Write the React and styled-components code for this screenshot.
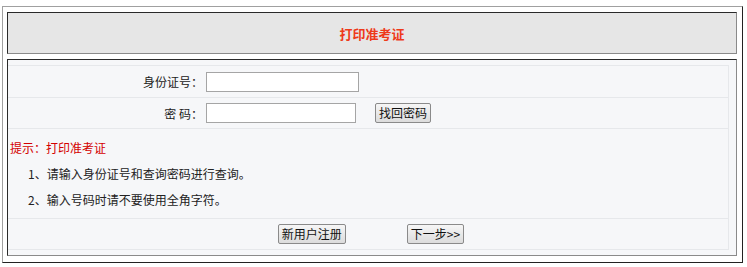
import React from 'react';
import styled, { createGlobalStyle } from 'styled-components';

const GlobalStyle = createGlobalStyle`
  html, body {
    margin: 0;
    padding: 0;
    background: #ffffff;
  }
  body {
    font-family: "Noto Sans CJK SC", "Liberation Sans", sans-serif;
    font-size: 12px;
    color: #222;
  }
`;

const Page = styled.div`
  padding: 6px 0 0 2px;
`;

const Frame = styled.div`
  box-sizing: border-box;
  width: 741px;
  height: 257px;
  display: flex;
  flex-direction: column;
  gap: 5px;
  padding: 5px 5px 6px 4px;
  border: 1px solid;
  border-color: #a0a0a0 #222 #222 #a0a0a0;
`;

const Cell = styled.div`
  box-sizing: border-box;
  border: 1px solid;
  border-color: #2a2a2a #8a8a8a #8a8a8a #2a2a2a;
  background: ${p => (p.$head ? '#e6e6e6' : '#f6f7f9')};
`;

const HeadCell = styled(Cell)`
  height: 42px;
  display: flex;
  align-items: center;
  justify-content: center;
`;

const Title = styled.h2`
  margin: 0;
  font-size: 13px;
  font-weight: bold;
  color: #ee3a1a;
`;

const BodyCell = styled(Cell)`
  flex: 1;
  padding: 5px 7px 4px 0;
`;

const FormTable = styled.div`
  border-right: 1px solid #e6e8eb;
  border-bottom: 1px solid #e6e8eb;
`;

const Row = styled.div`
  box-sizing: border-box;
  height: ${p => p.$h}px;
  border-top: 1px solid #e6e8eb;
  display: flex;
  align-items: center;
`;

const Label = styled.label`
  width: 195px;
  padding-right: 3px;
  text-align: right;
  color: #222;
`;

const Input = styled.input`
  box-sizing: border-box;
  width: ${p => p.$w}px;
  height: 20px;
  margin: 0;
  border: 1px solid #a5a5a5;
  background: #fff;
  font: inherit;
`;

const Button = styled.button`
  box-sizing: border-box;
  height: 20px;
  margin: 0;
  padding: 0 3px;
  border: 1px solid #8a8a8a;
  border-radius: 2px;
  background: linear-gradient(#f6f6f6, #dcdcdc);
  font-family: "Noto Sans CJK SC", "Liberation Sans", sans-serif;
  font-size: 12px;
  line-height: 16px;
  color: #111;
  margin-left: ${p => p.$ml || 0}px;
`;

const Tips = styled.div`
  box-sizing: border-box;
  height: 90px;
  border-top: 1px solid #e6e8eb;
  padding-top: 6px;
  line-height: 26px;
`;

const TipTitle = styled.div`
  padding-left: 2px;
  color: #d40000;
`;

const TipLine = styled.div`
  padding-left: 20px;
  line-height: ${p => p.$lh || 26}px;
  color: #222;
`;

const Actions = styled(Row)`
  justify-content: center;
  gap: 61px;
  padding-left: 6px;
`;

export default function App() {
  return (
    <>
      <GlobalStyle />
      <Page>
        <Frame>
          <HeadCell $head>
            <Title>打印准考证</Title>
          </HeadCell>
          <BodyCell>
            <FormTable>
              <Row $h={32}>
                <Label>身份证号：</Label>
                <Input type="text" $w={153} />
              </Row>
              <Row $h={31}>
                <Label>密&nbsp;码：</Label>
                <Input type="password" $w={150} />
                <Button $ml={19}>找回密码</Button>
              </Row>
              <Tips>
                <TipTitle>提示：打印准考证</TipTitle>
                <TipLine $lh={25}>1、请输入身份证号和查询密码进行查询。</TipLine>
                <TipLine $lh={27}>2、输入号码时请不要使用全角字符。</TipLine>
              </Tips>
              <Actions $h={31}>
                <Button>新用户注册</Button>
                <Button>下一步&gt;&gt;</Button>
              </Actions>
            </FormTable>
          </BodyCell>
        </Frame>
      </Page>
    </>
  );
}
